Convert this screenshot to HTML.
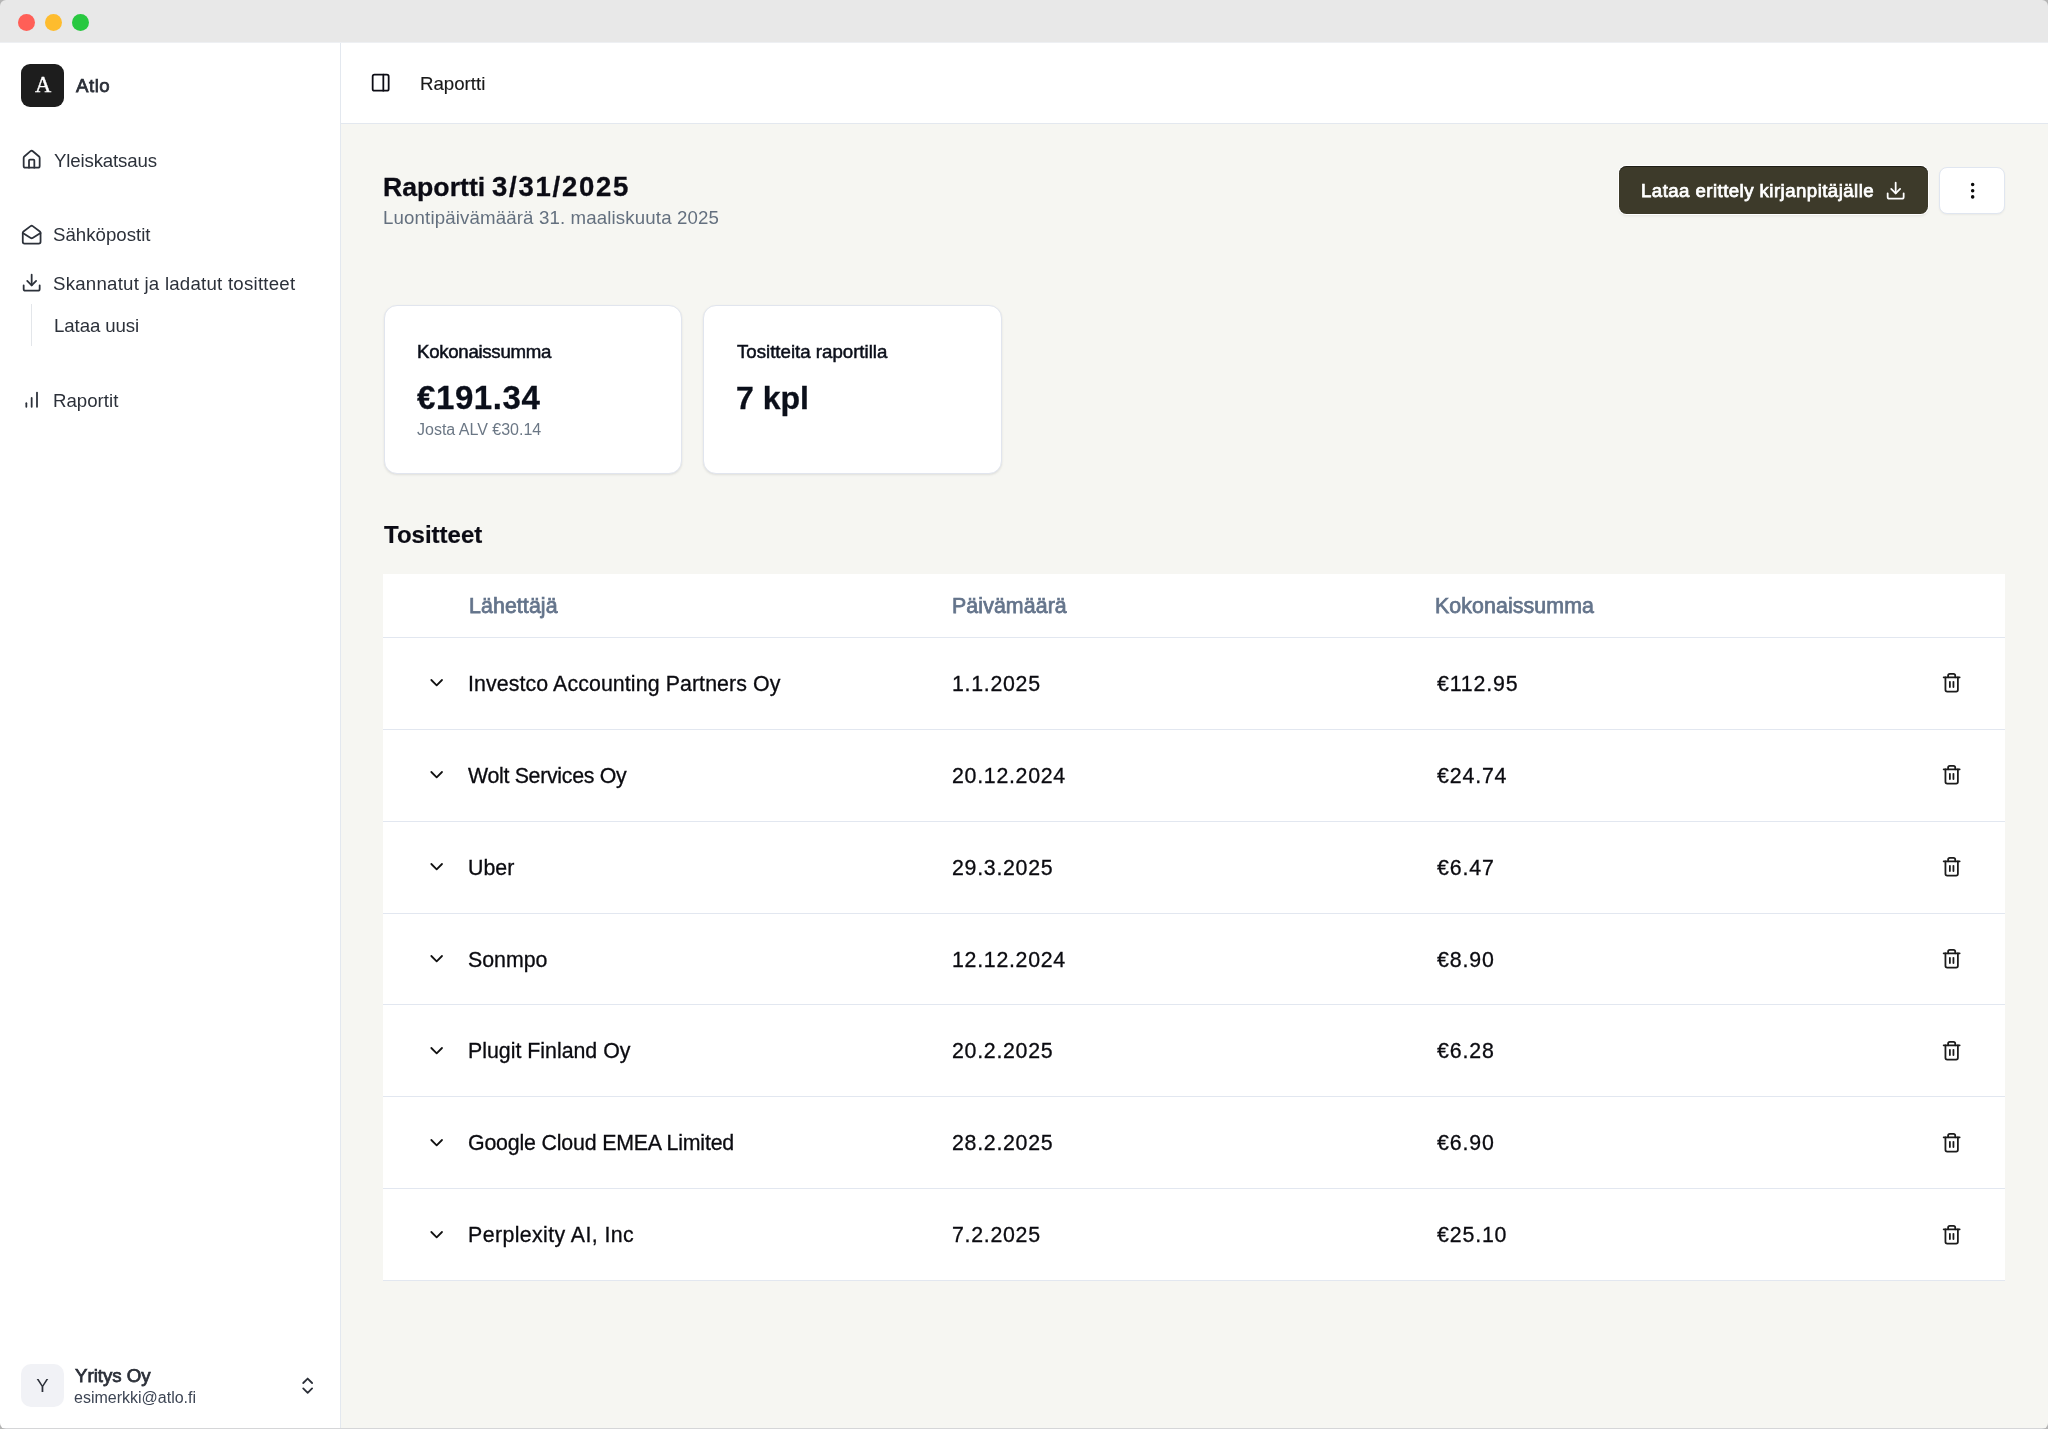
<!DOCTYPE html>
<html><head><meta charset="utf-8">
<style>
*{box-sizing:border-box;margin:0;padding:0}
html,body{width:2048px;height:1429px;overflow:hidden;background:#f6f6f2;font-family:"Liberation Sans",sans-serif}
.a{position:absolute}
.t{position:absolute;white-space:nowrap;line-height:1;will-change:transform}
.sb{font-weight:400;-webkit-text-stroke:0.75px currentColor}
.md{-webkit-text-stroke:0.5px currentColor}
svg.i{position:absolute;fill:none;stroke:currentColor;stroke-width:2;stroke-linecap:round;stroke-linejoin:round}
#titlebar{left:0;top:0;width:2048px;height:42px;background:#e8e8e8}
.dot{width:17px;height:17px;border-radius:50%}
#sidebar{left:0;top:42px;width:341px;height:1387px;background:#fff;border-right:1px solid #e3e8ef}
#header{left:341px;top:42px;width:1707px;height:82px;background:#fff;border-bottom:1px solid #e3e8ef}
.nav{font-size:18.67px;color:#2c313a}
.card{background:#fff;border:1px solid #e1e5ee;border-radius:13px;box-shadow:0 1px 3px rgba(0,0,0,0.06),0 1px 2px rgba(0,0,0,0.04)}
.th{font-size:21.33px;font-weight:400;-webkit-text-stroke:0.75px #64748b;color:#64748b;letter-spacing:0.1px}
.td{font-size:21.33px;color:#0b0b10;-webkit-text-stroke:0.3px currentColor}
.hl{position:absolute;left:383px;width:1622px;height:1px;background:#e2e7f0}
</style></head>
<body>
<!-- title bar -->
<div id="titlebar" class="a">
  <div class="a dot" style="left:18px;top:14px;background:#ff5f57"></div>
  <div class="a dot" style="left:45px;top:14px;background:#febc2e"></div>
  <div class="a dot" style="left:71.5px;top:14px;background:#28c840"></div>
</div>

<!-- sidebar -->
<div id="sidebar" class="a"></div>
<div class="a" style="left:21px;top:64px;width:43px;height:42.5px;border-radius:9px;background:#1d1d1d"></div>
<div class="t" style="left:35px;top:73.7px;font-family:'Liberation Serif',serif;font-size:22.5px;color:#fff;-webkit-text-stroke:0.35px #fff">A</div>
<div class="t sb" style="left:75.5px;top:76.5px;font-size:18.67px;color:#2b2f38;letter-spacing:0.5px">Atlo</div>

<!-- home -->
<svg class="i" style="left:21.3px;top:148.9px;color:#2c313a" width="21.33" height="21.33" viewBox="0 0 24 24"><path d="M15 21v-8a1 1 0 0 0-1-1h-4a1 1 0 0 0-1 1v8"/><path d="M3 10a2 2 0 0 1 .709-1.528l7-5.999a2 2 0 0 1 2.582 0l7 5.999A2 2 0 0 1 21 10v9a2 2 0 0 1-2 2H5a2 2 0 0 1-2-2z"/></svg>
<div class="t nav" style="left:54px;top:152.1px;letter-spacing:-0.15px">Yleiskatsaus</div>

<!-- mail -->
<svg class="i" style="left:21.2px;top:223.8px;color:#2c313a" width="21.33" height="21.33" viewBox="0 0 24 24"><path d="M21.2 8.4c.5.38.8.97.8 1.6v10a2 2 0 0 1-2 2H4a2 2 0 0 1-2-2V10a2 2 0 0 1 .8-1.6l8-6a2 2 0 0 1 2.4 0l8 6Z"/><path d="m22 10-8.97 5.7a1.94 1.94 0 0 1-2.06 0L2 10"/></svg>
<div class="t nav" style="left:53px;top:226.4px">Sähköpostit</div>

<!-- download -->
<svg class="i" style="left:21.2px;top:271.6px;color:#2c313a" width="21.33" height="21.33" viewBox="0 0 24 24"><path d="M21 15v4a2 2 0 0 1-2 2H5a2 2 0 0 1-2-2v-4"/><polyline points="7 10 12 15 17 10"/><line x1="12" x2="12" y1="15" y2="3"/></svg>
<div class="t nav" style="left:53px;top:274.6px;letter-spacing:0.23px">Skannatut ja ladatut tositteet</div>
<div class="a" style="left:31px;top:303.5px;width:1px;height:42px;background:#e3e6ea"></div>
<div class="t nav" style="left:54.4px;top:317.3px;letter-spacing:-0.1px">Lataa uusi</div>

<!-- chart -->
<svg class="i" style="left:21.2px;top:388.8px;color:#2c313a" width="21.33" height="21.33" viewBox="0 0 24 24"><line x1="18" x2="18" y1="20" y2="4"/><line x1="12" x2="12" y1="20" y2="10"/><line x1="6" x2="6" y1="20" y2="16"/></svg>
<div class="t nav" style="left:53.3px;top:391.9px">Raportit</div>

<!-- user -->
<div class="a" style="left:21px;top:1364px;width:43px;height:43px;border-radius:10px;background:#f1f2f6"></div>
<div class="t" style="left:21px;width:43px;text-align:center;top:1376.7px;font-size:18.67px;color:#2b2f38">Y</div>
<div class="t sb" style="left:75px;top:1367px;font-size:18.67px;color:#2b2f38">Yritys Oy</div>
<div class="t" style="left:74.4px;top:1389.7px;font-size:16px;color:#3d4554">esimerkki@atlo.fi</div>
<svg class="i" style="left:296.9px;top:1374.8px;color:#2b2f38" width="21.33" height="21.33" viewBox="0 0 24 24"><path d="m7 15 5 5 5-5"/><path d="m7 9 5-5 5 5"/></svg>

<!-- header -->
<div id="header" class="a"></div>
<svg class="i" style="left:370.1px;top:71.9px;color:#0c0c14" width="21.33" height="21.33" viewBox="0 0 24 24"><rect width="18" height="18" x="3" y="3" rx="2"/><path d="M15 3v18"/></svg>
<div class="t" style="left:420.4px;top:74.8px;font-size:18.67px;color:#1a1a1a;-webkit-text-stroke:0.15px currentColor">Raportti</div>

<!-- main -->
<div class="t" style="left:383.2px;top:174px;font-size:26.67px;font-weight:700;color:#0b0b14;letter-spacing:0px;-webkit-text-stroke:0.3px currentColor">Raportti</div>
<div class="t" style="left:492px;top:173.3px;font-size:27.5px;font-weight:700;color:#0b0b14;letter-spacing:1.75px;-webkit-text-stroke:0.3px currentColor">3/31/2025</div>
<div class="t" style="left:383.3px;top:209px;font-size:18.67px;color:#64707f;letter-spacing:0.14px">Luontipäivämäärä 31. maaliskuuta 2025</div>

<div class="a" style="left:1619px;top:166px;width:309px;height:48px;border-radius:7.5px;background:#3d3a2a;box-shadow:inset 0 1px 0 rgba(0,0,0,0.5),0 0 0 1px #fff,0 2px 3px rgba(0,0,0,0.08)"></div>
<div class="t sb" style="left:1641.2px;top:182.4px;font-size:18.67px;color:#fff;letter-spacing:0.44px">Lataa erittely kirjanpitäjälle</div>
<svg class="i" style="left:1885.4px;top:179.8px;color:#fff" width="21.33" height="21.33" viewBox="0 0 24 24"><path d="M21 15v4a2 2 0 0 1-2 2H5a2 2 0 0 1-2-2v-4"/><polyline points="7 10 12 15 17 10"/><line x1="12" x2="12" y1="15" y2="3"/></svg>

<div class="a" style="left:1939px;top:166.5px;width:66px;height:47px;border-radius:8px;background:#fff;border:1.33px solid #e0e6f0;box-shadow:0 1px 2px rgba(0,0,0,0.05)"></div>
<svg class="i" style="left:1961.7px;top:179.8px;color:#0a0a0a" width="21.33" height="21.33" viewBox="0 0 24 24"><circle cx="12" cy="12" r="1"/><circle cx="12" cy="5" r="1"/><circle cx="12" cy="19" r="1"/></svg>

<div class="a card" style="left:384px;top:305px;width:297.5px;height:168.5px"></div>
<div class="a card" style="left:703px;top:305px;width:298.5px;height:168.5px"></div>
<div class="t md" style="left:416.5px;top:343.4px;font-size:18.67px;color:#0b0f1a;letter-spacing:-0.3px">Kokonaissumma</div>
<div class="t" style="left:417px;top:380.75px;font-size:33px;font-weight:700;color:#0b0f1a;letter-spacing:0.6px;-webkit-text-stroke:0.3px currentColor">€191.34</div>
<div class="t" style="left:416.8px;top:421.5px;font-size:16px;color:#6b7785">Josta ALV €30.14</div>
<div class="t md" style="left:736.5px;top:343.3px;font-size:18.67px;color:#0b0f1a">Tositteita raportilla</div>
<div class="t" style="left:736.4px;top:381.6px;font-size:32px;font-weight:700;color:#0b0f1a;-webkit-text-stroke:0.3px currentColor">7 kpl</div>

<div class="t" style="left:383.8px;top:522.9px;font-size:24px;font-weight:700;color:#0b0b14;-webkit-text-stroke:0.2px currentColor">Tositteet</div>

<!-- table -->
<div class="a" style="left:383px;top:574px;width:1622px;height:706px;background:#fff"></div>
<div class="t th" style="left:468.6px;top:596.1px">Lähettäjä</div>
<div class="t th" style="left:952.2px;top:596.1px">Päivämäärä</div>
<div class="t th" style="left:1435.4px;top:596.1px">Kokonaissumma</div>
<div class="hl" style="top:637px"></div>
<svg class="i" style="left:426px;top:672.3px;color:#111" width="21.33" height="21.33" viewBox="0 0 24 24"><path d="m6 9 6 6 6-6"/></svg>
<div class="t td" style="left:467.8px;top:674.0px;letter-spacing:0.1px">Investco Accounting Partners Oy</div>
<div class="t td" style="left:951.6px;top:674.0px;letter-spacing:0.72px">1.1.2025</div>
<div class="t td" style="left:1437.4px;top:674.0px;letter-spacing:0.85px">€112.95</div>
<svg class="i" style="left:1941.3px;top:672.3px;color:#1c1c1c" width="21.33" height="21.33" viewBox="0 0 24 24"><path d="M3 6h18"/><path d="M19 6v14c0 1-1 2-2 2H7c-1 0-2-1-2-2V6"/><path d="M8 6V4c0-1 1-2 2-2h4c1 0 2 1 2 2v2"/><line x1="10" x2="10" y1="11" y2="17"/><line x1="14" x2="14" y1="11" y2="17"/></svg>
<div class="hl" style="top:729px"></div>
<svg class="i" style="left:426px;top:764.2px;color:#111" width="21.33" height="21.33" viewBox="0 0 24 24"><path d="m6 9 6 6 6-6"/></svg>
<div class="t td" style="left:467.8px;top:765.8px;letter-spacing:-0.3px">Wolt Services Oy</div>
<div class="t td" style="left:951.6px;top:765.8px;letter-spacing:0.72px">20.12.2024</div>
<div class="t td" style="left:1437.4px;top:765.8px;letter-spacing:0.85px">€24.74</div>
<svg class="i" style="left:1941.3px;top:764.2px;color:#1c1c1c" width="21.33" height="21.33" viewBox="0 0 24 24"><path d="M3 6h18"/><path d="M19 6v14c0 1-1 2-2 2H7c-1 0-2-1-2-2V6"/><path d="M8 6V4c0-1 1-2 2-2h4c1 0 2 1 2 2v2"/><line x1="10" x2="10" y1="11" y2="17"/><line x1="14" x2="14" y1="11" y2="17"/></svg>
<div class="hl" style="top:821px"></div>
<svg class="i" style="left:426px;top:856.0px;color:#111" width="21.33" height="21.33" viewBox="0 0 24 24"><path d="m6 9 6 6 6-6"/></svg>
<div class="t td" style="left:467.8px;top:857.7px;letter-spacing:0px">Uber</div>
<div class="t td" style="left:951.6px;top:857.7px;letter-spacing:0.72px">29.3.2025</div>
<div class="t td" style="left:1437.4px;top:857.7px;letter-spacing:0.85px">€6.47</div>
<svg class="i" style="left:1941.3px;top:856.0px;color:#1c1c1c" width="21.33" height="21.33" viewBox="0 0 24 24"><path d="M3 6h18"/><path d="M19 6v14c0 1-1 2-2 2H7c-1 0-2-1-2-2V6"/><path d="M8 6V4c0-1 1-2 2-2h4c1 0 2 1 2 2v2"/><line x1="10" x2="10" y1="11" y2="17"/><line x1="14" x2="14" y1="11" y2="17"/></svg>
<div class="hl" style="top:913px"></div>
<svg class="i" style="left:426px;top:947.9px;color:#111" width="21.33" height="21.33" viewBox="0 0 24 24"><path d="m6 9 6 6 6-6"/></svg>
<div class="t td" style="left:467.8px;top:949.5px;letter-spacing:0px">Sonmpo</div>
<div class="t td" style="left:951.6px;top:949.5px;letter-spacing:0.72px">12.12.2024</div>
<div class="t td" style="left:1437.4px;top:949.5px;letter-spacing:0.85px">€8.90</div>
<svg class="i" style="left:1941.3px;top:947.9px;color:#1c1c1c" width="21.33" height="21.33" viewBox="0 0 24 24"><path d="M3 6h18"/><path d="M19 6v14c0 1-1 2-2 2H7c-1 0-2-1-2-2V6"/><path d="M8 6V4c0-1 1-2 2-2h4c1 0 2 1 2 2v2"/><line x1="10" x2="10" y1="11" y2="17"/><line x1="14" x2="14" y1="11" y2="17"/></svg>
<div class="hl" style="top:1004px"></div>
<svg class="i" style="left:426px;top:1039.8px;color:#111" width="21.33" height="21.33" viewBox="0 0 24 24"><path d="m6 9 6 6 6-6"/></svg>
<div class="t td" style="left:467.8px;top:1041.4px;letter-spacing:0px">Plugit Finland Oy</div>
<div class="t td" style="left:951.6px;top:1041.4px;letter-spacing:0.72px">20.2.2025</div>
<div class="t td" style="left:1437.4px;top:1041.4px;letter-spacing:0.85px">€6.28</div>
<svg class="i" style="left:1941.3px;top:1039.8px;color:#1c1c1c" width="21.33" height="21.33" viewBox="0 0 24 24"><path d="M3 6h18"/><path d="M19 6v14c0 1-1 2-2 2H7c-1 0-2-1-2-2V6"/><path d="M8 6V4c0-1 1-2 2-2h4c1 0 2 1 2 2v2"/><line x1="10" x2="10" y1="11" y2="17"/><line x1="14" x2="14" y1="11" y2="17"/></svg>
<div class="hl" style="top:1096px"></div>
<svg class="i" style="left:426px;top:1131.6px;color:#111" width="21.33" height="21.33" viewBox="0 0 24 24"><path d="m6 9 6 6 6-6"/></svg>
<div class="t td" style="left:467.8px;top:1133.3px;letter-spacing:-0.17px">Google Cloud EMEA Limited</div>
<div class="t td" style="left:951.6px;top:1133.3px;letter-spacing:0.72px">28.2.2025</div>
<div class="t td" style="left:1437.4px;top:1133.3px;letter-spacing:0.85px">€6.90</div>
<svg class="i" style="left:1941.3px;top:1131.6px;color:#1c1c1c" width="21.33" height="21.33" viewBox="0 0 24 24"><path d="M3 6h18"/><path d="M19 6v14c0 1-1 2-2 2H7c-1 0-2-1-2-2V6"/><path d="M8 6V4c0-1 1-2 2-2h4c1 0 2 1 2 2v2"/><line x1="10" x2="10" y1="11" y2="17"/><line x1="14" x2="14" y1="11" y2="17"/></svg>
<div class="hl" style="top:1188px"></div>
<svg class="i" style="left:426px;top:1223.5px;color:#111" width="21.33" height="21.33" viewBox="0 0 24 24"><path d="m6 9 6 6 6-6"/></svg>
<div class="t td" style="left:467.8px;top:1225.1px;letter-spacing:0.4px">Perplexity AI, Inc</div>
<div class="t td" style="left:951.6px;top:1225.1px;letter-spacing:0.72px">7.2.2025</div>
<div class="t td" style="left:1437.4px;top:1225.1px;letter-spacing:0.85px">€25.10</div>
<svg class="i" style="left:1941.3px;top:1223.5px;color:#1c1c1c" width="21.33" height="21.33" viewBox="0 0 24 24"><path d="M3 6h18"/><path d="M19 6v14c0 1-1 2-2 2H7c-1 0-2-1-2-2V6"/><path d="M8 6V4c0-1 1-2 2-2h4c1 0 2 1 2 2v2"/><line x1="10" x2="10" y1="11" y2="17"/><line x1="14" x2="14" y1="11" y2="17"/></svg>
<div class="hl" style="top:1280px"></div>
<div class="a" style="left:0;top:42px;width:2048px;height:1px;background:#eef0f3"></div>
<div class="a" style="left:0;top:1428px;width:2048px;height:1px;background:#d5d6d8"></div>
<div class="a" style="left:0;top:0;width:2048px;height:1429px;border-radius:6px;box-shadow:0 0 0 12px #b4b4b4;pointer-events:none"></div>
</body></html>
